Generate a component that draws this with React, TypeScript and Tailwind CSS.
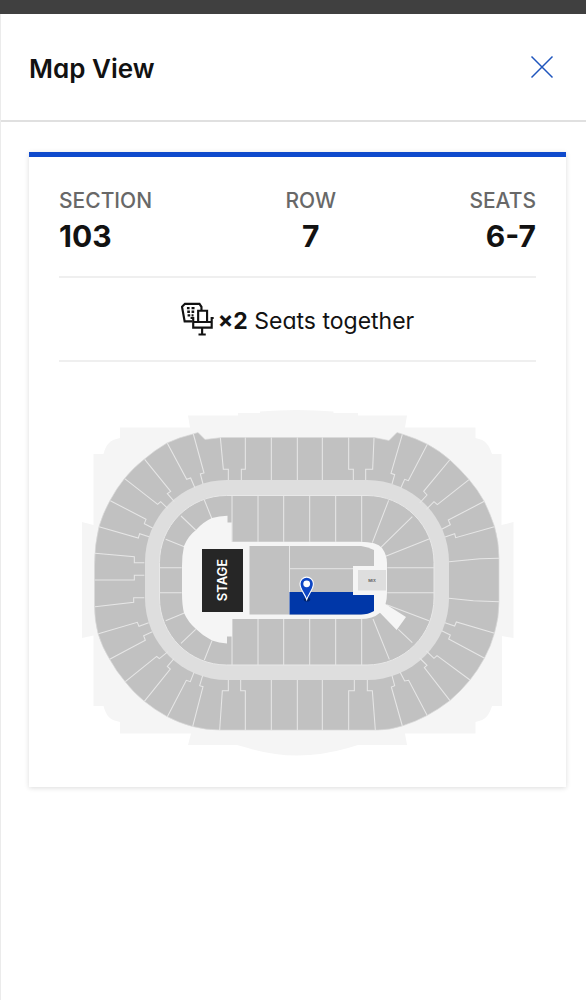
import React from "react";

function CloseIcon() {
  return (
    <svg viewBox="0 0 24 24" className="size-6" fill="none" stroke="#1f55bd" strokeWidth="1.5" aria-hidden="true">
      <path d="M1.5 1.5 L22.5 22.5 M22.5 1.5 L1.5 22.5" />
    </svg>
  );
}

function SeatsIcon() {
  return (
    <svg viewBox="22 20 100 102" className="h-[34px] w-[33px] shrink-0" fill="none" stroke="#121212" strokeWidth="6.5" aria-hidden="true">
      <path d="M84 44 V34 L78 25 H34 L25 34 L33 78 H56" />
      <path d="M40 38h8M54 38h9M41 49h8M54 49h8M42 60h8M54 60h6" strokeWidth="7" />
      <path d="M74 79 V46 H101 V79" />
      <path d="M51 68 H59 V97 H115 V68 H121 M59 80 H115 M86 97 V118 M75 118 H97" />
    </svg>
  );
}

function SeatingMap() {
  return (
    <svg viewBox="59 400 477 365" className="block w-full" role="img" aria-label="Seating map, section 103 highlighted">
      <path
        fill="#f5f5f5"
        d="M188 415.5 H238 V413 H260 V411.5 Q297 408.5 333.5 411.5 V413 H358 V415.5 H407 L405 427.5 H475.5 V438 C486 440 489 445 492 454 H501.5 V525 L513.5 522 V638 L502 636 V706 H492 C489 715 486 720 475.5 722 V733.5 H405 L407 745 H358 L348 748 Q296 763 248 748 L237 745 H188 L191 733.5 H120 V722 C109 720 106 715 103.5 706 H93.5 V635.5 L82 638 V522 L93.5 525 V454 H103.5 C106 445 109 440 120 438 V427.5 H190 Z"
      />
      <path
        fill="#c1c1c1"
        stroke="#dadada"
        strokeWidth="0.7"
        d="M94.5 580 V565 Q94.5 545 99 526.5 Q103 513 110 500.5 Q116 489 124.5 478.5 Q133 468 144.5 459 Q155 450 167 443 Q180 437 193 434 L198 432.5 L205 439.5 L222 437.5 H374 L389 440.5 L397 432.5 L402 434 Q415 438 427 444 Q440 451 450 460 Q460 469 469 479.5 Q478 490 484 501 Q490 513 494.5 526.5 Q499 542 499 558 V602 Q499 618 494.5 633 Q491 646 484.5 658 Q478 670 470 680 Q461 691 450 700.5 Q439 709 427 715.5 Q415 722 402 726 Q390 730 378 730 H220 Q206 730 192.5 726.5 Q179 723 167 716.5 Q155 710 144 701 Q133 692 125 681.5 Q116 671 109.5 659 Q102 647 98 633.5 Q94.5 620 94.5 606 Z"
      />
      <rect x="145" y="480" width="304" height="200" rx="82" ry="82" fill="#dedede" />
      <rect x="159.5" y="495.5" width="274.5" height="169.5" rx="67" ry="67" fill="#c1c1c1" stroke="#e8e8e8" strokeWidth="1" />

      <g fill="none" stroke="#e6e6e6" strokeWidth="3.2">
        <g transform="translate(75 400) scale(0.33333)">
          <path d="M355 102 L387 219 L376 222 L384 252 M277 130 L335 238 L347 234 L360 264 M209 178 L287 274 L277 281 L298 305 M149 236 L248 313 L257 305 L278 325 M106 302 L213 358 L208 371 L233 384 M72 380 L190 414 L194 401 L222 410 M60 460 L178 470 V488 H208" />
          <path d="M388 300 L411 357 M318 348 L362 390 M272 418 L328 440 M253 503 H320" />
        </g>
        <g transform="translate(75 570) scale(0.33333)">
          <path d="M59 30 H178 V16 H208 M60 110 L176 97 V83 H208 M70 191 L187 157 L192 169 L221 158 M104 268 L211 211 L206 197 L232 185 M151 335 L245 259 L253 266 L279 245 M208 394 L286 297 L277 289 L297 266 M277 440 L334 331 L346 335 L357 307 M353 470 L384 350 L374 347 L383 317" />
          <path d="M253 68 H320 M272 152 L328 129 M318 220 L362 178 M388 270 L411 212" />
        </g>
        <g transform="translate(215 400) scale(0.33333)">
          <path d="M16 112 L25 208 H40 V240 M91 112 V208 H79 V240 M169 112 V240 M247 112 V240 M322 112 V240 M401 112 V208 H415 V240" />
          <path d="M51 287 V425 M129 287 V425 M206 287 V425 M284 287 V425 M362 287 V425 M440 287 V425" />
        </g>
        <g transform="translate(215 570) scale(0.33333)">
          <path d="M14 480 L22 362 H40 V330 M91 480 V362 H77 V330 M169 330 V480 M247 330 V480 M322 330 V480 M401 480 V362 H418 V330" />
          <path d="M51 147 V285 M129 147 V285 M206 147 V285 M284 147 V285 M362 147 V285 M440 147 V285" />
        </g>
        <g transform="translate(360 400) scale(0.33333)">
          <path d="M42 113 L38 208 H17 V240 M127 103 L93 220 L104 224 L96 252 M202 133 L145 242 L134 238 L122 265 M269 180 L191 274 L201 285 L179 309 M327 239 L232 314 L222 305 L199 328 M373 304 L265 360 L271 374 L245 388 M403 380 L287 413 L284 401 L255 411 M417 475 L360 476 L267 485" />
          <path d="M86 301 L37 428 M157 350 L62 443 M207 417 L77 469 M222 503 H82" />
        </g>
        <g transform="translate(360 570) scale(0.33333)">
          <path d="M46 480 L37 362 H22 V330 M127 468 L94 351 L104 347 L96 317 M202 437 L146 331 L134 333 L120 306 M270 392 L193 293 L201 286 L179 264 M330 330 L231 257 L222 265 L199 243 M374 265 L266 207 L271 195 L245 182 M404 190 L289 156 L284 168 L255 158 M417 95 L340 92 L266 85" />
          <path d="M88 268 L39 147 M157 218 L115 178 M207 152 L80 104 M222 68 H82" />
        </g>
      </g>

      <path
        fill="#f5f5f5"
        d="M182 593 V566 Q182 555 184 546 Q188 536 196 530 Q203 522 212 518 Q219 516 227.5 515.7 V522.5 H231.7 V541.7 H360 Q377 541.7 382 548 Q387 555 387 563 V593 Q387 599 385.5 604 L406 617 L396.7 630 L380 612.7 Q373 619 360 619 H232 V636.5 H227 V643.5 Q219 643 212 640.6 Q203 636 196 629 Q188 622 184 613 Q182 605 182 593 Z"
      />

      <rect x="202" y="549" width="41" height="63" fill="#262626" />
      <text
        x="222"
        y="580"
        transform="rotate(-90 222 580)"
        textAnchor="middle"
        dominantBaseline="central"
        fill="#ffffff"
        className="font-['Inter',sans-serif] text-[13px] font-semibold"
      >
        STAGE
      </text>

      <path fill="#c1c1c1" d="M249.5 546 H361 Q368 547 374 550 V614.5 H249.5 Z" />
      <path stroke="#e6e6e6" strokeWidth="1" fill="none" d="M289.5 546 V614.5 M289.5 568.7 H374" />
      <path fill="#f5f5f5" d="M353 566 H384 V595 H353 Z M374 611 V615 H361 Z" />
      <path fill="#0037a8" d="M289.5 592 H353 V595 H374 V611 Q368 614.5 361 614.5 H289.5 Z" />
      <rect x="358" y="570" width="28" height="20.5" fill="#dedede" />
      <text x="372" y="580.5" textAnchor="middle" dominantBaseline="central" fill="#555555" className="font-['Inter',sans-serif] text-[4px] font-semibold">
        MIX
      </text>

      <ellipse cx="307" cy="599.5" rx="3.2" ry="2" fill="#00236b" />
      <path
        d="M306.7 599.5 C304.5 593 300 589.5 300 583.8 A6.7 6.7 0 0 1 313.4 583.8 C313.4 589.5 309 593 306.7 599.5 Z"
        fill="#0e46c4"
        stroke="#ffffff"
        strokeWidth="1.1"
      />
      <circle cx="306.7" cy="583.8" r="3.4" fill="#ffffff" />
    </svg>
  );
}

const details = [
  { label: "SECTION", value: "103", align: "text-left" },
  { label: "ROW", value: "7", align: "text-center" },
  { label: "SEATS", value: "6-7", align: "text-right" },
];

export default function App() {
  return (
    <div className="min-h-screen border-t-[14px] border-t-[#404040] bg-white font-['Inter',sans-serif] text-[#121212] [font-feature-settings:'cv11']">
      <div className="min-h-[986px] border-l border-l-[#ebebeb]">
        <header className="flex h-[108px] items-center justify-between border-b-2 border-b-[#e0e0e0] pr-8 pl-7">
          <h1 className="pt-1 text-[26px] leading-8 font-semibold">Map View</h1>
          <button type="button" aria-label="Close" className="cursor-pointer">
            <CloseIcon />
          </button>
        </header>
        <main className="pt-[30px] pr-5 pb-8 pl-7">
          <section className="border-t-[5px] border-t-[#0f4acc] px-[30px] pb-[22px] shadow-[0_1px_5px_rgba(0,0,0,0.14)]">
            <dl className="flex justify-between border-b-2 border-b-[#efefef] pt-8 pb-[21px]">
              {details.map((d) => (
                <div key={d.label} className={d.align}>
                  <dt className="text-[21px] leading-6 font-medium text-[#686868]">{d.label}</dt>
                  <dd className="mt-1 text-[30px] leading-[38px] font-bold">{d.value}</dd>
                </div>
              ))}
            </dl>
            <div className="flex h-[84px] items-center justify-center gap-1 border-b-2 border-b-[#efefef]">
              <SeatsIcon />
              <p className="pt-1 text-[23px] leading-8">
                <b className="font-bold">×2</b> Seats together
              </p>
            </div>
            <div className="pt-[38px]">
              <SeatingMap />
            </div>
          </section>
        </main>
      </div>
    </div>
  );
}
